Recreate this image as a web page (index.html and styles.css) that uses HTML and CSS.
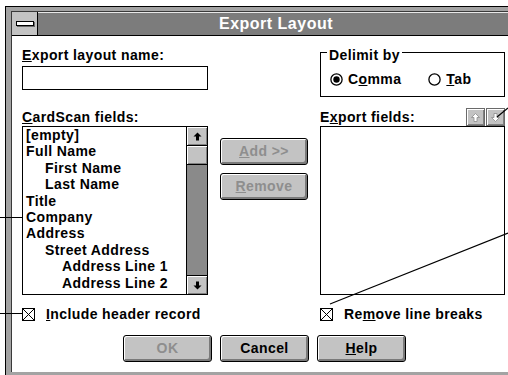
FILE: index.html
```html
<!DOCTYPE html>
<html lang="en">
<head>
    <meta charset="UTF-8">
    <title>Export Layout</title>
    <link rel="stylesheet" href="styles.css">
</head>
<body>
<div class="window">
  <div class="frame">
    <div class="caption">
        <div class="sysmenu"><span class="sysbar"></span></div>
        <div class="title">Export Layout</div>
    </div>
    <div class="client">
        <!-- layout name + delimiter -->
        <div class="col-left">
            <div class="lbl"><u>E</u>xport layout name:</div>
            <div class="textbox"></div>
        </div>
        <div class="group">
            <div class="legend">Delimit by</div>
            <div class="radios">
                <span class="radio">
                    <svg width="13" height="13" viewBox="0 0 13 13"><circle cx="6.5" cy="6.5" r="5.6" fill="#fff" stroke="#000" stroke-width="1.3"/><circle cx="6.5" cy="6.5" r="3.2" fill="#000"/></svg>
                    <span>C<u>o</u>mma</span>
                </span>
                <span class="radio">
                    <svg width="13" height="13" viewBox="0 0 13 13"><circle cx="6.5" cy="6.5" r="5.6" fill="#fff" stroke="#000" stroke-width="1.3"/></svg>
                    <span><u>T</u>ab</span>
                </span>
            </div>
        </div>

        <!-- field lists -->
        <div class="col-list">
            <div class="head"><span class="lbl"><u>C</u>ardScan fields:</span></div>
            <div class="listbox">
                <div class="items">
                    <div class="item">[empty]</div>
                    <div class="item">Full Name</div>
                    <div class="item l1">First Name</div>
                    <div class="item l1">Last Name</div>
                    <div class="item">Title</div>
                    <div class="item">Company</div>
                    <div class="item">Address</div>
                    <div class="item l1">Street Address</div>
                    <div class="item l2">Address Line 1</div>
                    <div class="item l2">Address Line 2</div>
                </div>
                <div class="scroll">
                    <div class="sbtn up">
                        <svg width="9" height="9" viewBox="0 0 9 9"><path d="M4.5 0.5 L8.5 4.5 L6 4.5 L6 8.5 L3 8.5 L3 4.5 L0.5 4.5 Z" fill="#000"/></svg>
                    </div>
                    <div class="thumb"></div>
                    <div class="track"></div>
                    <div class="sbtn down">
                        <svg width="9" height="9" viewBox="0 0 9 9"><path d="M4.5 8.5 L8.5 4.5 L6 4.5 L6 0.5 L3 0.5 L3 4.5 L0.5 4.5 Z" fill="#000"/></svg>
                    </div>
                </div>
            </div>
        </div>
        <div class="col-mid">
            <div class="btn off"><span><u>A</u>dd &gt;&gt;</span></div>
            <div class="btn off"><span><u>R</u>emove</span></div>
        </div>
        <div class="col-list">
            <div class="head">
                <span class="lbl">E<u>x</u>port fields:</span>
                <span class="mini">
                    <svg width="9" height="9" viewBox="0 0 9 9"><path d="M4.5 0.5 L8.5 4.5 L6 4.5 L6 8.5 L3 8.5 L3 4.5 L0.5 4.5 Z" fill="#fff" stroke="#8a8a8a" stroke-width="0.8"/></svg>
                </span>
                <span class="mini">
                    <svg width="9" height="9" viewBox="0 0 9 9"><path d="M4.5 8.5 L8.5 4.5 L6 4.5 L6 0.5 L3 0.5 L3 4.5 L0.5 4.5 Z" fill="#fff" stroke="#8a8a8a" stroke-width="0.8"/></svg>
                </span>
            </div>
            <div class="listbox"></div>
        </div>

        <!-- options -->
        <div class="check">
            <svg width="13" height="13" viewBox="0 0 13 13"><rect x="0.5" y="0.5" width="12" height="12" fill="#fff" stroke="#000"/><path d="M1 1 L12 12 M12 1 L1 12" stroke="#000" stroke-width="1"/></svg>
            <span><u>I</u>nclude header record</span>
        </div>
        <div class="check right">
            <svg width="13" height="13" viewBox="0 0 13 13"><rect x="0.5" y="0.5" width="12" height="12" fill="#fff" stroke="#000"/><path d="M1 1 L12 12 M12 1 L1 12" stroke="#000" stroke-width="1"/></svg>
            <span>Re<u>m</u>ove line breaks</span>
        </div>

        <div class="actions">
            <div class="btn off"><span>OK</span></div>
            <div class="btn"><span>Cancel</span></div>
            <div class="btn"><span><u>H</u>elp</span></div>
        </div>
    </div>
  </div>
</div>

<svg class="notes" width="508" height="375" viewBox="0 0 508 375">
    <line x1="0" y1="217.5" x2="22" y2="217.5" stroke="#000" stroke-width="1"/>
    <line x1="0" y1="313.5" x2="23" y2="313.5" stroke="#000" stroke-width="1"/>
    <line x1="508" y1="233" x2="330" y2="304" stroke="#000" stroke-width="1.2"/>
    <line x1="508" y1="108" x2="497" y2="117" stroke="#000" stroke-width="1.2"/>
</svg>
</body>
</html>
```

FILE: styles.css
```css
body{
    margin: 0;
    background: #fff;
    font-family: "Liberation Sans", Arial, sans-serif;
    font-size: 14px;
    font-weight: bold;
    letter-spacing: 0.4px;
    color: #000;
    overflow: hidden;
}
.window{
    margin: 6px 0 0 5px;
    border-top: 1px solid #000;
    border-left: 1px solid #000;
    background: #a3a3a3;
    padding: 4px 0 3px 5px;
}
.frame{
    border-top: 1px solid #3a3a3a;
    border-left: 1px solid #3a3a3a;
}
.caption{
    display: flex;
    height: 23px;
    border-bottom: 1px solid #000;
}
.sysmenu{
    width: 25px;
    background: #c3c3c3;
    border-right: 1px solid #000;
    display: flex;
    align-items: center;
    justify-content: center;
}
.sysbar{
    width: 16px;
    height: 3px;
    background: #fff;
    border: 1px solid #000;
    box-shadow: 1px 1px 0 #6a6a6a;
}
.title{
    flex: 1;
    background: #7c7c7c;
    border-top: 1px solid #e8e8e8;
    color: #fff;
    font-size: 16px;
    letter-spacing: 0.5px;
    line-height: 22px;
    text-align: center;
    padding-left: 6px;
}
.client{
    background: #fff;
    height: 336px;
    box-sizing: border-box;
    padding: 11px 0 0 10px;
    display: grid;
    grid-template-columns: 186px 88px 185px;
    grid-template-rows: 50px 198px 27px 40px;
    column-gap: 12px;
    align-items: start;
}
.lbl{
    line-height: 16px;
    white-space: nowrap;
}
.textbox{
    margin-top: 3px;
    height: 24px;
    border: 1px solid #000;
    box-sizing: border-box;
}
.group{
    grid-column: 3;
    margin-top: 5px;
    border: 1px solid #000;
    height: 45px;
    box-sizing: border-box;
}
.legend{
    width: fit-content;
    margin: -6px 0 0 6px;
    padding: 0 2px;
    background: #fff;
    line-height: 16px;
}
.radios{
    display: flex;
    gap: 27px;
    margin-top: 8px;
    padding-left: 9px;
    line-height: 16px;
}
.radio{
    display: flex;
    align-items: center;
    gap: 5px;
}
.col-list{
    padding-top: 12px;
}
.head{
    height: 17px;
    display: flex;
    align-items: flex-end;
}
.head .lbl{
    flex: 1;
    align-self: flex-start;
}
.mini{
    width: 19px;
    height: 18px;
    box-sizing: border-box;
    border: 1px solid #6a6a6a;
    background: #c3c3c3;
    box-shadow: inset 1px 1px #fff, inset -1px -1px #808080;
    display: flex;
    align-items: center;
    justify-content: center;
}
.mini + .mini{
    margin-left: 1px;
}
.listbox{
    height: 169px;
    border: 1px solid #000;
    box-sizing: border-box;
    display: flex;
}
.items{
    flex: 1;
    padding: 0 0 0 3px;
}
.item{
    line-height: 16.4px;
    white-space: nowrap;
}
.item.l1{ padding-left: 19px; }
.item.l2{ padding-left: 36px; }
.scroll{
    width: 20px;
    border-left: 1px solid #000;
    display: flex;
    flex-direction: column;
}
.sbtn{
    height: 18px;
    background: #c3c3c3;
    box-shadow: inset 1px 1px #fff, inset -1px -1px #808080;
    display: flex;
    align-items: center;
    justify-content: center;
}
.sbtn.up{ border-bottom: 1px solid #000; }
.sbtn.down{ border-top: 1px solid #000; }
.thumb{
    height: 18px;
    background: #c3c3c3;
    border-bottom: 1px solid #000;
    box-shadow: inset 1px 1px #fff, inset -1px -1px #808080;
}
.track{
    flex: 1;
    background: #8a8a8a;
}
.col-mid{
    margin-top: 41px;
    display: flex;
    flex-direction: column;
    gap: 8px;
}
.btn{
    height: 27px;
    box-sizing: border-box;
    border: 1px solid #000;
    border-radius: 3px;
    background: #c3c3c3;
    box-shadow: inset 1px 1px #fff, inset -2px -2px #7a7a7a;
    display: flex;
    align-items: center;
    justify-content: center;
    line-height: 16px;
    padding-bottom: 1px;
}
.btn.off{
    color: #8e8e8e;
}
.check{
    margin-top: 11px;
    display: flex;
    align-items: center;
    gap: 11px;
    line-height: 16px;
    white-space: nowrap;
}
.check.right{
    grid-column: 3;
}
.actions{
    grid-column: 1 / -1;
    margin-top: 13px;
    padding-left: 101px;
    display: flex;
    gap: 8px;
}
.actions .btn{
    width: 89px;
}
.notes{
    position: absolute;
    top: 0;
    left: 0;
    pointer-events: none;
}
```
